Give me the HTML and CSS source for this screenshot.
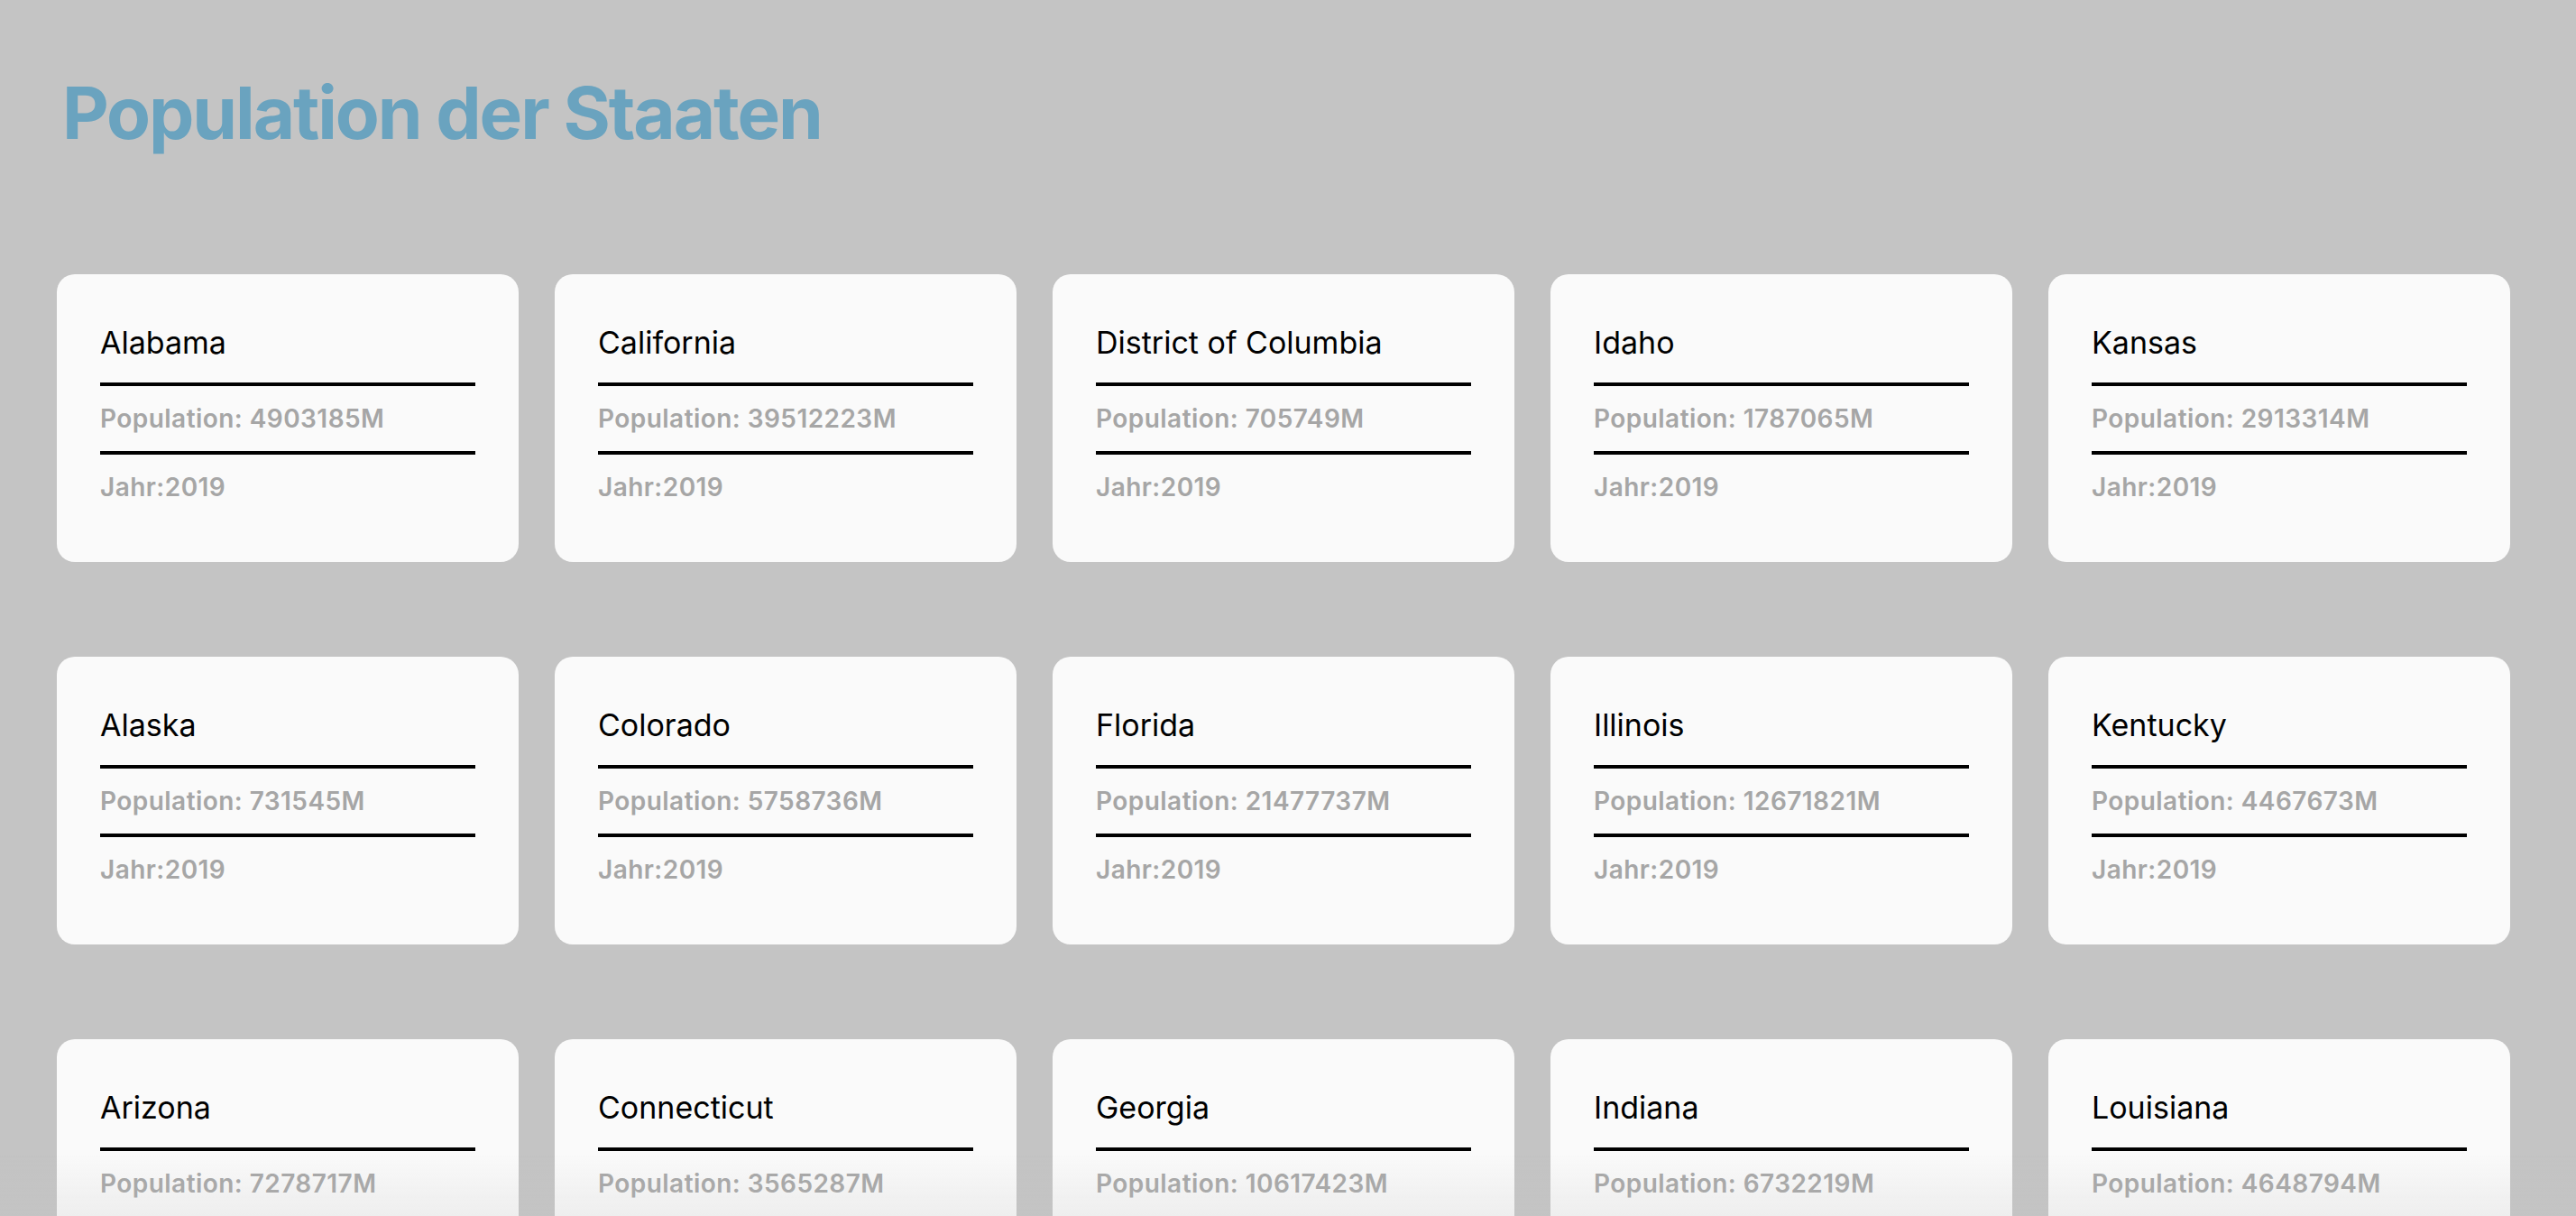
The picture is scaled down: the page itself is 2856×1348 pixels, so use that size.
FILE: index.html
```html
<!DOCTYPE html>
<html lang="de">
<head>
<meta charset="utf-8">
<title>Population der Staaten</title>
<link rel="stylesheet" href="styles.css">
</head>
<body>
<main class="page">
  <h1 class="title">Population der Staaten</h1>
  <section class="grid">
    <article class="card"><h2 class="name">Alabama</h2><hr class="rule"><p class="meta">Population: 4903185M</p><hr class="rule"><p class="meta">Jahr:2019</p></article>
    <article class="card"><h2 class="name">California</h2><hr class="rule"><p class="meta">Population: 39512223M</p><hr class="rule"><p class="meta">Jahr:2019</p></article>
    <article class="card"><h2 class="name">District of Columbia</h2><hr class="rule"><p class="meta">Population: 705749M</p><hr class="rule"><p class="meta">Jahr:2019</p></article>
    <article class="card"><h2 class="name">Idaho</h2><hr class="rule"><p class="meta">Population: 1787065M</p><hr class="rule"><p class="meta">Jahr:2019</p></article>
    <article class="card"><h2 class="name">Kansas</h2><hr class="rule"><p class="meta">Population: 2913314M</p><hr class="rule"><p class="meta">Jahr:2019</p></article>

    <article class="card"><h2 class="name">Alaska</h2><hr class="rule"><p class="meta">Population: 731545M</p><hr class="rule"><p class="meta">Jahr:2019</p></article>
    <article class="card"><h2 class="name">Colorado</h2><hr class="rule"><p class="meta">Population: 5758736M</p><hr class="rule"><p class="meta">Jahr:2019</p></article>
    <article class="card"><h2 class="name">Florida</h2><hr class="rule"><p class="meta">Population: 21477737M</p><hr class="rule"><p class="meta">Jahr:2019</p></article>
    <article class="card"><h2 class="name">Illinois</h2><hr class="rule"><p class="meta">Population: 12671821M</p><hr class="rule"><p class="meta">Jahr:2019</p></article>
    <article class="card"><h2 class="name">Kentucky</h2><hr class="rule"><p class="meta">Population: 4467673M</p><hr class="rule"><p class="meta">Jahr:2019</p></article>

    <article class="card"><h2 class="name">Arizona</h2><hr class="rule"><p class="meta">Population: 7278717M</p><hr class="rule"><p class="meta">Jahr:2019</p></article>
    <article class="card"><h2 class="name">Connecticut</h2><hr class="rule"><p class="meta">Population: 3565287M</p><hr class="rule"><p class="meta">Jahr:2019</p></article>
    <article class="card"><h2 class="name">Georgia</h2><hr class="rule"><p class="meta">Population: 10617423M</p><hr class="rule"><p class="meta">Jahr:2019</p></article>
    <article class="card"><h2 class="name">Indiana</h2><hr class="rule"><p class="meta">Population: 6732219M</p><hr class="rule"><p class="meta">Jahr:2019</p></article>
    <article class="card"><h2 class="name">Louisiana</h2><hr class="rule"><p class="meta">Population: 4648794M</p><hr class="rule"><p class="meta">Jahr:2019</p></article>
  </section>
</main>
<div class="fade"></div>
</body>
</html>
```

FILE: styles.css
```css
html, body {
  margin: 0;
  padding: 0;
  background: #c4c4c4;
}

body {
  font-family: Inter, "Liberation Sans", sans-serif;
  color: #000;
}

.page {
  padding: 85px 0 0 63px;
}

.title {
  margin: 0 0 0 6px;
  font-size: 80px;
  line-height: 80px;
  font-weight: 700;
  color: #6aa3bf;
  letter-spacing: -2.1px;
}

.grid {
  display: grid;
  grid-template-columns: repeat(5, 512px);
  column-gap: 40px;
  row-gap: 105px;
  margin-top: 139px;
}

.card {
  box-sizing: border-box;
  height: 319px;
  background: #fafafa;
  border-radius: 20px;
  padding: 56px 48px 0 48px;
  display: flex;
  flex-direction: column;
}

.name {
  margin: 0;
  font-size: 34px;
  line-height: 40px;
  font-weight: 400;
  color: #000;
}

.rule {
  margin: 20px 0 0 0;
  height: 4px;
  border: 0;
  background: #000;
}

.name + .rule {
  margin-top: 24px;
}

.meta {
  margin: 20px 0 0 0;
  font-size: 28px;
  line-height: 32px;
  font-weight: 600;
  letter-spacing: 0.45px;
  color: #a6a6a6;
}

.fade {
  position: fixed;
  left: 0;
  right: 0;
  bottom: 0;
  height: 70px;
  pointer-events: none;
  background: linear-gradient(to bottom, rgba(196, 196, 196, 0), rgba(196, 196, 196, 0.22));
}
```
